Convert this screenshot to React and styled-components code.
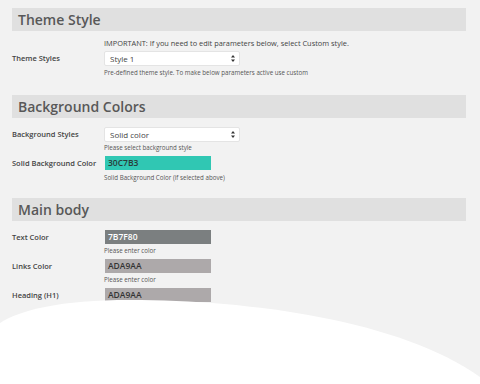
import React from 'react';
import styled, { createGlobalStyle } from 'styled-components';

const GlobalStyle = createGlobalStyle`
  html, body { margin: 0; padding: 0; background: #f2f2f2; }
  body { font-family: "Open Sans", "Noto Sans", sans-serif; color: #444; }
`;

const Page = styled.div`
  position: relative;
  width: 480px;
  height: 384px;
  overflow: hidden;
  padding: 8px 14px 0 12px;
  box-sizing: border-box;
`;

const Section = styled.section`
  margin-bottom: ${p => p.$gap || 0}px;
`;

const Bar = styled.h2`
  margin: 0;
  height: 23px;
  line-height: 23px;
  padding-left: 6px;
  background: #e0e0e0;
  font-size: 14px;
  font-weight: 600;
  color: #585858;
`;

const Row = styled.div`
  display: grid;
  grid-template-columns: 92px 1fr;
  margin-top: ${p => p.$top}px;
`;

const Label = styled.div`
  grid-column: 1;
  height: 15px;
  line-height: 15px;
  font-size: 7.5px;
  font-weight: 600;
  color: #444;
  white-space: nowrap;
`;

const Field = styled.div`
  grid-column: 2;
  display: flex;
  flex-direction: column;
  align-items: flex-start;
`;

const Note = styled.div`
  font-size: 7.4px;
  line-height: 10px;
  color: #444;
  margin-bottom: 3px;
  white-space: nowrap;
`;

const Help = styled.div`
  font-size: 6.2px;
  line-height: 8px;
  margin-top: ${p => p.$top ?? 3}px;
  color: #555;
  white-space: nowrap;
`;

const Select = styled.div`
  width: 136px;
  height: 15px;
  box-sizing: border-box;
  background: #fff;
  border: 1px solid #e4e4e4;
  border-radius: 2px;
  display: flex;
  align-items: center;
  justify-content: space-between;
  padding: 0 4px 0 5px;
  font-size: 8px;
  color: #444;
`;

const Swatch = styled.div`
  width: 106px;
  height: 14px;
  margin-left: 1px;
  box-sizing: border-box;
  background: ${p => p.$color};
  color: ${p => p.$text};
  font-size: 8.5px;
  font-weight: 600;
  line-height: 14px;
  padding-left: 3px;
`;

const Wave = styled.svg`
  position: absolute;
  left: 0;
  top: 294px;
  width: 480px;
  height: 90px;
`;

const Arrows = () => (
  <svg width="4" height="7" viewBox="0 0 4 7">
    <path d="M2 0 L4 2.6 L0 2.6 Z M2 7 L4 4.4 L0 4.4 Z" fill="#333" />
  </svg>
);

export default function App() {
  return (
    <Page>
      <GlobalStyle />
      <Section $gap={18}>
        <Bar>Theme Style</Bar>
        <Row $top={7}>
          <Label style={{ marginTop: 13 }}>Theme Styles</Label>
          <Field>
            <Note>IMPORTANT: If you need to edit parameters below, select Custom style.</Note>
            <Select>Style 1<Arrows /></Select>
            <Help>Pre-defined theme style. To make below parameters active use custom</Help>
          </Field>
        </Row>
      </Section>

      <Section $gap={16}>
        <Bar>Background Colors</Bar>
        <Row $top={9}>
          <Label>Background Styles</Label>
          <Field>
            <Select>Solid color<Arrows /></Select>
            <Help $top={2}>Please select background style</Help>
          </Field>
        </Row>
        <Row $top={4}>
          <Label>Solid Background Color</Label>
          <Field>
            <Swatch $color="#30c7b3" $text="#2a3a38">30C7B3</Swatch>
            <Help $top={4}>Solid Background Color (if selected above)</Help>
          </Field>
        </Row>
      </Section>

      <Section>
        <Bar>Main body</Bar>
        <Row $top={9}>
          <Label>Text Color</Label>
          <Field>
            <Swatch $color="#7b7f80" $text="#fff">7B7F80</Swatch>
            <Help>Please enter color</Help>
          </Field>
        </Row>
        <Row $top={4}>
          <Label>Links Color</Label>
          <Field>
            <Swatch $color="#ada9aa" $text="#333">ADA9AA</Swatch>
            <Help>Please enter color</Help>
          </Field>
        </Row>
        <Row $top={4}>
          <Label>Heading (H1)</Label>
          <Field>
            <Swatch $color="#ada9aa" $text="#333">ADA9AA</Swatch>
          </Field>
        </Row>
      </Section>

      <Wave viewBox="0 294 480 90" preserveAspectRatio="none">
        <path d="M0 323 C20 310 60 300 130 300 C250 300 400 320 480 377 L480 384 L0 384 Z" fill="#fff" />
      </Wave>
    </Page>
  );
}
